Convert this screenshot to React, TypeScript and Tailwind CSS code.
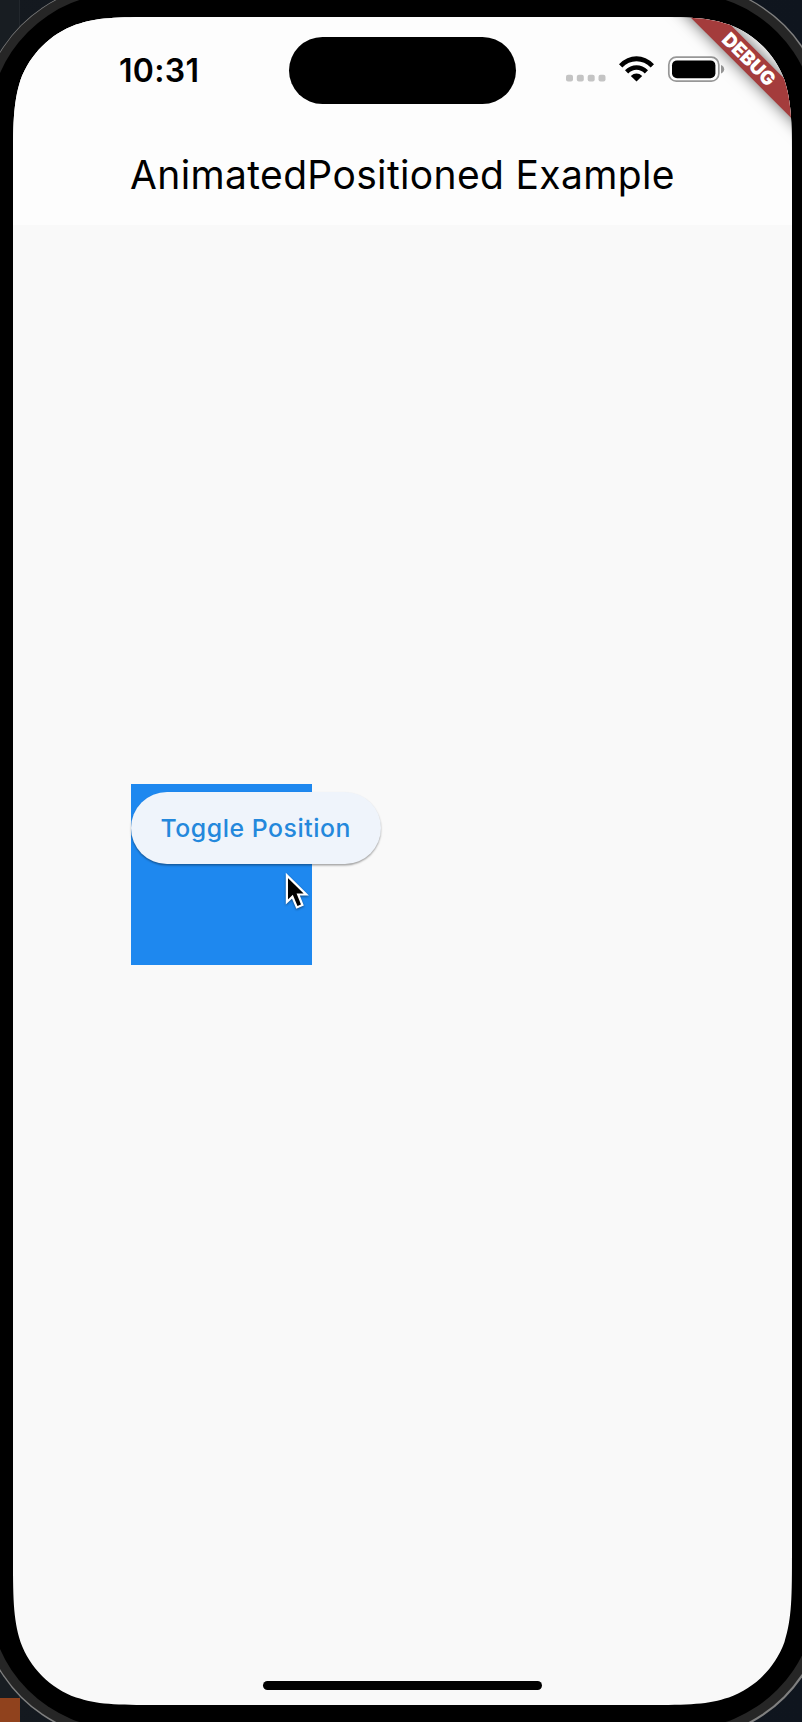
import React from "react";

function StatusIcons() {
  return (
    <svg className="h-[30px] w-[162px]" viewBox="564 54 162 30" fill="none" aria-hidden="true">
      <g fill="#c4c4c4">
        <rect x="566" y="74.8" width="7" height="6.6" rx="2" />
        <rect x="576.8" y="74.8" width="7" height="6.6" rx="2" />
        <rect x="587.7" y="74.8" width="7" height="6.6" rx="2" />
        <rect x="598.5" y="74.8" width="7" height="6.6" rx="2" />
      </g>
      <g fill="#000">
        <path d="M619 64.2 Q627 56.3 636.5 56.3 Q646 56.3 654 64.2 L650.7 67.5 Q644.6 61.3 636.5 61.3 Q628.4 61.3 622.3 67.5 Z" />
        <path d="M625 70.3 Q630.3 65.2 636.5 65.2 Q642.7 65.2 648 70.3 L644.8 73.4 Q641 69.8 636.5 69.8 Q632 69.8 628.2 73.4 Z" />
        <path d="M630.8 76 Q633.5 73.6 636.5 73.6 Q639.5 73.6 642.2 76 L636.5 81.6 Z" />
      </g>
      <rect x="668.8" y="57.2" width="50" height="24" rx="7.5" stroke="#979797" strokeWidth="1.7" />
      <rect x="672" y="60.4" width="43.4" height="17.8" rx="5" fill="#000" />
      <path d="M721 65 Q724.2 66.4 724.2 69.2 Q724.2 72 721 73.4 Z" fill="#979797" />
    </svg>
  );
}

function Cursor() {
  return (
    <svg
      className="absolute top-[86px] left-[152px] h-[42px] w-[30px] drop-shadow-[0_1px_1px_rgba(0,0,0,0.45)]"
      viewBox="283 870 30 42"
      aria-hidden="true"
    >
      <path
        d="M286.9 875.4 V902 L292.4 896.7 L296.9 907.4 L302.4 905 L298.2 894.5 H306.2 Z"
        fill="#000"
        stroke="#fff"
        strokeWidth="2.2"
      />
    </svg>
  );
}

function DebugBanner() {
  return (
    <div className="absolute top-[31px] left-[585.7px] flex h-[22.5px] w-[300px] rotate-45 items-center justify-center bg-[#a43c3c] shadow-[0_0_16px_rgba(0,0,0,0.6)]">
      <span className="text-[19px] leading-none font-black text-white">DEBUG</span>
    </div>
  );
}

function Screen() {
  return (
    <div className="relative flex h-[1688px] w-[779px] flex-col overflow-hidden bg-[#f9f9f9] [clip-path:path('M152.9_0_H626.1_C670.2_0_692.2_0_712_6.5_L715.9_7.5_C741.7_16.9_762.1_37.3_771.5_63.1_C779_86.8_779_108.8_779_152.9_V1535.1_C779_1579.2_779_1601.2_771.5_1624.9_C762.1_1650.7_741.7_1671.1_715.9_1680.5_L712_1681.5_C692.2_1688_670.2_1688_626.1_1688_H152.9_C108.8_1688_86.8_1688_67_1681.5_L63.1_1680.5_C37.3_1671.1_16.9_1650.7_7.5_1624.9_C0_1601.2_0_1579.2_0_1535.1_V152.9_C0_108.8_0_86.8_7.5_63.1_C16.9_37.3_37.3_16.9_63.1_7.5_L67_6.5_C86.8_0_108.8_0_152.9_0_Z')]">
      <header className="flex h-[208px] shrink-0 flex-col bg-[#fdfdfd]">
        <div className="flex h-[108px] items-start pt-[20.5px]">
          <div className="w-[276px] pt-[15.2px] pl-[106px] text-[32px] leading-[36px] font-semibold tracking-[0.3px] text-black">
            10:31
          </div>
          <div className="h-[66.7px] w-[227px] shrink-0 rounded-full bg-black" />
          <div className="pt-[16.5px] pl-[48px]">
            <StatusIcons />
          </div>
        </div>
        <h1 className="flex h-[100px] items-center justify-center text-[39px] leading-none font-normal tracking-[0.35px] whitespace-nowrap text-black">
          AnimatedPositioned Example
        </h1>
      </header>
      <main className="flex-1 pt-[559px] pl-[117.8px]">
        <div className="relative h-[181px] w-[181px] bg-[#1e88ef] pt-[8px]">
          <button className="flex h-[72px] w-[250px] items-center justify-center rounded-full bg-[#eff4fb] pt-[1px] text-[24.8px] font-medium tracking-[0.55px] whitespace-nowrap text-[#2488dc] shadow-[0_1.5px_2px_rgba(0,0,0,0.35)]">
            Toggle Position
          </button>
          <Cursor />
        </div>
      </main>
      <footer className="flex h-[24px] justify-center">
        <div className="h-[9.5px] w-[279.5px] rounded-full bg-black" />
      </footer>
      <DebugBanner />
    </div>
  );
}

export default function App() {
  return (
    <div className="relative h-[1722px] w-[802px] overflow-hidden bg-linear-to-r from-[#14191f] to-[#0f151e] font-['Inter',sans-serif]">
      <div className="absolute top-0 left-0 h-[1722px] w-[20px] border-r border-[#22272c] bg-[#181d22]" />
      <div className="absolute bottom-0 left-0 h-[24px] w-[20px] bg-[#90421d]" />
      <div className="relative -mt-[17.5px] -ml-[21.5px] h-[1757px] w-[848px] rounded-[143.5px] bg-[#808080] p-[1.8px]">
        <div className="h-full w-full rounded-[141.7px] bg-[#262626] p-[8.7px]">
          <div className="h-full w-full rounded-[133px] bg-black p-[24px]">
            <Screen />
          </div>
        </div>
      </div>
    </div>
  );
}
